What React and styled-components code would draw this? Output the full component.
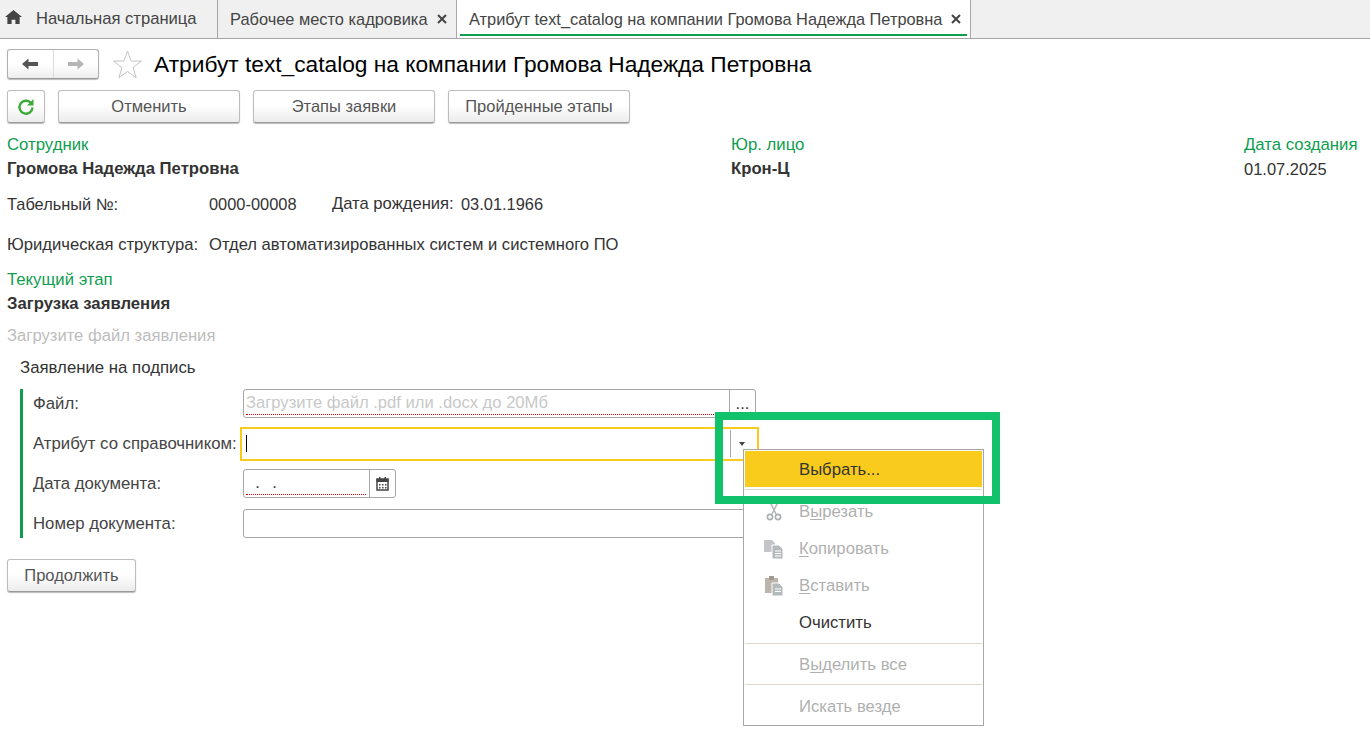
import React from "react"
import styled, { createGlobalStyle } from "styled-components"

const GlobalStyle = createGlobalStyle`
  html, body {
    margin: 0;
    padding: 0;
    background: #fff;
  }
  body {
    font-family: "Liberation Sans", Arial, sans-serif;
    font-size: 16.5px;
    color: #333;
    overflow: hidden;
  }
`

const Page = styled.div`
  position: relative;
  width: 1370px;
  height: 740px;
  overflow: hidden;
`

const TabBar = styled.div`
  display: flex;
  height: 38px;
  background: #f0f0f0;
  border-bottom: 1px solid #a6a6a6;
`

const Tab = styled.div`
  position: relative;
  display: flex;
  align-items: center;
  width: ${(p) => p.$width}px;
  padding-left: ${(p) => p.$pad}px;
  box-sizing: border-box;
  background: ${(p) => (p.$active ? "#fff" : "transparent")};
  border-right: 1px solid #a6a6a6;
  color: #444;
  font-size: ${(p) => p.$size || 16.4}px;
  white-space: nowrap;
`

const TabLine = styled.span`
  position: absolute;
  left: 3px;
  right: 3px;
  bottom: 2px;
  height: 2px;
  background: #0f9d50;
`

const Close = styled.span`
  display: flex;
  margin-left: 9px;
`

const HomeIcon = styled.svg`
  width: 17px;
  height: 14px;
  margin: 0 14px 4px 5px;
  fill: #444;
`

const Content = styled.div`
  padding: 10px 0 0 7px;
`

const NavRow = styled.div`
  display: flex;
  align-items: center;
  height: 30px;
`

const NavGroup = styled.div`
  display: flex;
  width: 92px;
  height: 30px;
  box-sizing: border-box;
  border: 1px solid #b0b0b0;
  border-bottom-color: #999;
  border-radius: 3px;
  background: linear-gradient(#fff, #fff 50%, #eee);
  box-shadow: 0 1px 1px #bbb;
`

const NavCell = styled.div`
  flex: 1;
  display: flex;
  align-items: center;
  justify-content: center;
  & + & {
    border-left: 1px solid #ddd;
  }
`

const Star = styled.svg`
  width: 31px;
  height: 30px;
  margin: 0 11px 0 13px;
`

const Title = styled.h1`
  margin: 0;
  font-size: 22.72px;
  font-weight: 400;
  color: #000;
  white-space: nowrap;
`

const CommandRow = styled.div`
  display: flex;
  gap: 13px;
  margin-top: 11px;
`

const Button = styled.div`
  display: flex;
  align-items: center;
  justify-content: center;
  width: ${(p) => p.$width}px;
  height: 33px;
  box-sizing: border-box;
  border: 1px solid #bdbdbd;
  border-bottom-color: #9a9a9a;
  border-radius: 3px;
  background: linear-gradient(#fff, #fff 45%, #ececec);
  box-shadow: 0 1px 1px #bbb;
  color: #555;
`

const InfoGrid = styled.div`
  display: grid;
  grid-template-columns: 724px 513px 1fr;
  margin-top: 10px;
`

const GreenLabel = styled.div`
  height: 24px;
  line-height: 24px;
  margin-top: ${(p) => p.$top || 0}px;
  color: #0f9d50;
  font-size: 16.75px;
  white-space: nowrap;
`

const Strong = styled.div`
  height: 24px;
  line-height: 24px;
  font-size: ${(p) => (p.$plain ? 16.5 : 16.7)}px;
  font-weight: ${(p) => (p.$plain ? 400 : 700)};
`

const InfoRow = styled.div`
  display: flex;
  align-items: center;
  height: 24px;
  margin-top: ${(p) => p.$top}px;
  white-space: nowrap;
`

const InfoLabel = styled.span`
  width: ${(p) => p.$width}px;
  flex: none;
  font-size: ${(p) => p.$size || 16.5}px;
`

const InfoValue = styled.span`
  font-size: ${(p) => p.$size || 16.6}px;
`

const Hint = styled.div`
  height: 24px;
  line-height: 24px;
  margin-top: 8px;
  font-size: 16.65px;
  color: #bdbdbd;
`

const GroupTitle = styled.div`
  height: 24px;
  line-height: 24px;
  margin: 8px 0 0 13px;
  font-size: 16.8px;
`

const FormGroup = styled.div`
  display: flex;
  flex-direction: column;
  gap: 11px;
  width: 736px;
  margin: 9px 0 0 13px;
  padding-left: 10px;
  border-left: 3px solid #0f9d50;
`

const FormRow = styled.div`
  display: flex;
  align-items: center;
  height: 29px;
`

const FormLabel = styled.span`
  flex: none;
  width: 210px;
  font-size: 16.75px;
  color: #444;
  white-space: nowrap;
`

const Field = styled.div`
  position: relative;
  display: flex;
  width: ${(p) => p.$width}px;
  height: 29px;
  box-sizing: border-box;
  border: 1px solid #a6a6a6;
  border-radius: 3px;
  background: #fff;
`

const ActiveField = styled.div`
  display: flex;
  flex: none;
  align-items: center;
  width: 519px;
  height: 34px;
  margin-left: -3px;
  box-sizing: border-box;
  border: 2px solid #f9cb1c;
`

const Caret = styled.span`
  width: 1px;
  height: 17px;
  margin-left: 4px;
  background: #000;
`

const FieldText = styled.div`
  flex: 1;
  position: relative;
  padding-left: 2px;
  line-height: 26px;
  font-size: 16.6px;
  color: ${(p) => (p.$muted ? "#c8c8c8" : "#333")};
  white-space: nowrap;
  &::after {
    content: "";
    display: ${(p) => (p.$required ? "block" : "none")};
    position: absolute;
    left: 2px;
    right: 3px;
    bottom: 2px;
    border-bottom: 1px dotted #e00000;
  }
`

const FieldButton = styled.div`
  flex: none;
  display: flex;
  align-items: center;
  justify-content: center;
  width: 25px;
  border-left: 1px solid #a6a6a6;
  color: #333;
`

const DropButton = styled(FieldButton)`
  height: 27px;
  margin-left: auto;
  width: 27px;
  box-sizing: border-box;
  padding-right: 5px;
`

const ContinueButton = styled(Button)`
  margin-top: 21px;
`

const Menu = styled.div`
  position: absolute;
  left: 743px;
  top: 449px;
  width: 241px;
  height: 277px;
  box-sizing: border-box;
  padding: 1px;
  border: 1px solid #a6a6a6;
  background: #fff;
  font-size: 16.7px;
`

const MenuItem = styled.div`
  display: flex;
  align-items: center;
  height: ${(p) => p.$height || 37}px;
  box-sizing: border-box;
  padding: ${(p) => (p.$low ? 2 : 0)}px 0 0 54px;
  position: relative;
  background: ${(p) => (p.$selected ? "#f9cb1c" : "transparent")};
  color: ${(p) => (p.$disabled ? "#b0b0b0" : "#333")};
  u {
    text-underline-offset: 2px;
  }
`

const MenuIcon = styled.svg`
  position: absolute;
  left: 18px;
  top: 9px;
  width: 22px;
  height: 20px;
`

const MenuLine = styled.div`
  height: 1px;
  margin: ${(p) => p.$margin || "0"};
  background: #ddd8c8;
`

const Highlight = styled.div`
  position: absolute;
  left: 715px;
  top: 412px;
  width: 285px;
  height: 92px;
  box-sizing: border-box;
  border: 8px solid #12c26a;
  pointer-events: none;
`

const X = () => (
  <svg width="10" height="10" viewBox="0 0 10 10">
    <path d="M1 1l8 8M9 1l-8 8" stroke="#444" strokeWidth="2" />
  </svg>
)

const Arrow = ({ dir, color }) => (
  <svg width="18" height="14" viewBox="0 0 18 14">
    <path
      d={dir === "left" ? "M1 7l6.500-5.500v3.500h9.500v4H7.500v3.500z" : "M17 7l-6.500-5.500v3.500H1v4h9.500v3.500z"}
      fill={color}
    />
  </svg>
)

const PagesIcon = () => (
  <MenuIcon viewBox="0 0 22 20">
    <path d="M1 1h8l3 3v9H1z" fill="#c2c6c8" />
    <path d="M9 6h7l4 4v10H9z" fill="#b5babd" stroke="#fff" strokeWidth="1" />
    <path d="M12 12h6M12 14.500h6M12 17h6" stroke="#fff" />
  </MenuIcon>
)

const App = () => {
  return (
    <Page>
      <GlobalStyle />
      <TabBar>
        <Tab $width={218} $pad={0} $size={16.6}>
          <HomeIcon viewBox="0 0 18 16" preserveAspectRatio="none">
            <path d="M9 0l9 8h-2.500v8H11v-5H7v5H2.500V8H0z" />
          </HomeIcon>
          Начальная страница
        </Tab>
        <Tab $width={239} $pad={12}>
          Рабочее место кадровика
          <Close><X /></Close>
        </Tab>
        <Tab $width={514} $pad={12} $size={16.36} $active>
          Атрибут text_catalog на компании Громова Надежда Петровна
          <Close><X /></Close>
          <TabLine />
        </Tab>
      </TabBar>
      <Content>
        <NavRow>
          <NavGroup>
            <NavCell><Arrow dir="left" color="#555" /></NavCell>
            <NavCell><Arrow dir="right" color="#b5b5b5" /></NavCell>
          </NavGroup>
          <Star viewBox="0 0 31 30">
            <path
              d="M15.500 2l3.500 10h10.500l-8.500 6.500 3.200 10.300-8.700-6.300-8.700 6.300L10 18.500 1.500 12H12z"
              fill="#fff"
              stroke="#c4c4c4"
            />
          </Star>
          <Title>Атрибут text_catalog на компании Громова Надежда Петровна</Title>
        </NavRow>
        <CommandRow>
          <Button $width={38}>
            <svg width="20" height="20" viewBox="0 0 20 20">
              <path d="M16.500 10.500a6.500 6.500 0 1 1-2-5" fill="none" stroke="#3aa935" strokeWidth="2.400" />
              <path d="M17.500 2v6.500H11z" fill="#3aa935" />
            </svg>
          </Button>
          <Button $width={182}>Отменить</Button>
          <Button $width={182}>Этапы заявки</Button>
          <Button $width={182}>Пройденные этапы</Button>
        </CommandRow>
        <InfoGrid>
          <div>
            <GreenLabel>Сотрудник</GreenLabel>
            <Strong>Громова Надежда Петровна</Strong>
          </div>
          <div>
            <GreenLabel>Юр. лицо</GreenLabel>
            <Strong>Крон-Ц</Strong>
          </div>
          <div>
            <GreenLabel>Дата создания</GreenLabel>
            <Strong $plain>01.07.2025</Strong>
          </div>
        </InfoGrid>
        <InfoRow $top={11}>
          <InfoLabel $width={202} $size={16.4}>Табельный №:</InfoLabel>
          <InfoLabel $width={123} $size={16.4}>0000-00008</InfoLabel>
          <InfoLabel $width={129} $size={16.6}>Дата рождения:</InfoLabel>
          <InfoValue $size={16.4}>03.01.1966</InfoValue>
        </InfoRow>
        <InfoRow $top={17}>
          <InfoLabel $width={202} $size={16.65}>Юридическая структура:</InfoLabel>
          <InfoValue>Отдел автоматизированных систем и системного ПО</InfoValue>
        </InfoRow>
        <GreenLabel $top={11}>Текущий этап</GreenLabel>
        <Strong>Загрузка заявления</Strong>
        <Hint>Загрузите файл заявления</Hint>
        <GroupTitle>Заявление на подпись</GroupTitle>
        <FormGroup>
          <FormRow>
            <FormLabel>Файл:</FormLabel>
            <Field $width={513}>
              <FieldText $muted $required>Загрузите файл .pdf или .docx до 20Мб</FieldText>
              <FieldButton>...</FieldButton>
            </Field>
          </FormRow>
          <FormRow>
            <FormLabel>Атрибут со справочником:</FormLabel>
            <ActiveField>
              <Caret />
              <DropButton>
                <svg width="6" height="4" viewBox="0 0 6 4">
                  <path d="M0 0h6L3 4z" fill="#444" />
                </svg>
              </DropButton>
            </ActiveField>
          </FormRow>
          <FormRow>
            <FormLabel>Дата документа:</FormLabel>
            <Field $width={153}>
              <FieldText $required>{"\u00a0\u00a0.\u00a0\u00a0\u2009."}</FieldText>
              <FieldButton>
                <svg width="13" height="14" viewBox="0 0 13 14">
                  <path d="M1 2h11v11H1z" fill="none" stroke="#444" strokeWidth="1.500" />
                  <path d="M0.500 2h12v3H0.500zM3 0h1.500v3H3zM8.500 0H10v3H8.500z" fill="#444" />
                  <path d="M3 7h1.500v1.500H3zM6 7h1.500v1.500H6zM9 7h1.500v1.500H9zM3 10h1.500v1.500H3zM6 10h1.500v1.500H6zM9 10h1.500v1.500H9z" fill="#444" />
                </svg>
              </FieldButton>
            </Field>
          </FormRow>
          <FormRow>
            <FormLabel>Номер документа:</FormLabel>
            <Field $width={513} />
          </FormRow>
        </FormGroup>
        <ContinueButton $width={129}>Продолжить</ContinueButton>
      </Content>
      <Menu>
        <MenuItem $selected $low $height={36}>Выбрать...</MenuItem>
        <MenuLine $margin="2px 0 3px" />
        <MenuItem $disabled>
          <MenuIcon viewBox="0 0 22 20">
            <path d="M7 0l6 12M15 0L9 12" stroke="#b5babd" strokeWidth="1.600" fill="none" />
            <circle cx="7" cy="15" r="2.600" fill="none" stroke="#a9aeb1" strokeWidth="1.600" />
            <circle cx="15" cy="15" r="2.600" fill="none" stroke="#a9aeb1" strokeWidth="1.600" />
          </MenuIcon>
          В<u>ы</u>резать
        </MenuItem>
        <MenuItem $disabled>
          <PagesIcon />
          <u>К</u>опировать
        </MenuItem>
        <MenuItem $disabled>
          <MenuIcon viewBox="0 0 22 20">
            <path d="M2 2h13v15H2z" fill="#bdb4aa" />
            <path d="M6 0h5v4H6z" fill="#9f9a94" />
            <path d="M9 7h7l4 4v9H9z" fill="#b5babd" stroke="#fff" />
            <path d="M12 13h6M12 15.500h6" stroke="#fff" />
          </MenuIcon>
          <u>В</u>ставить
        </MenuItem>
        <MenuItem>Очистить</MenuItem>
        <MenuLine $margin="2px 0 0" />
        <MenuItem $disabled $low $height={40}>В<u>ы</u>делить все</MenuItem>
        <MenuLine />
        <MenuItem $disabled $low $height={41}>Искать везде</MenuItem>
      </Menu>
      <Highlight />
    </Page>
  )
}

export default App
